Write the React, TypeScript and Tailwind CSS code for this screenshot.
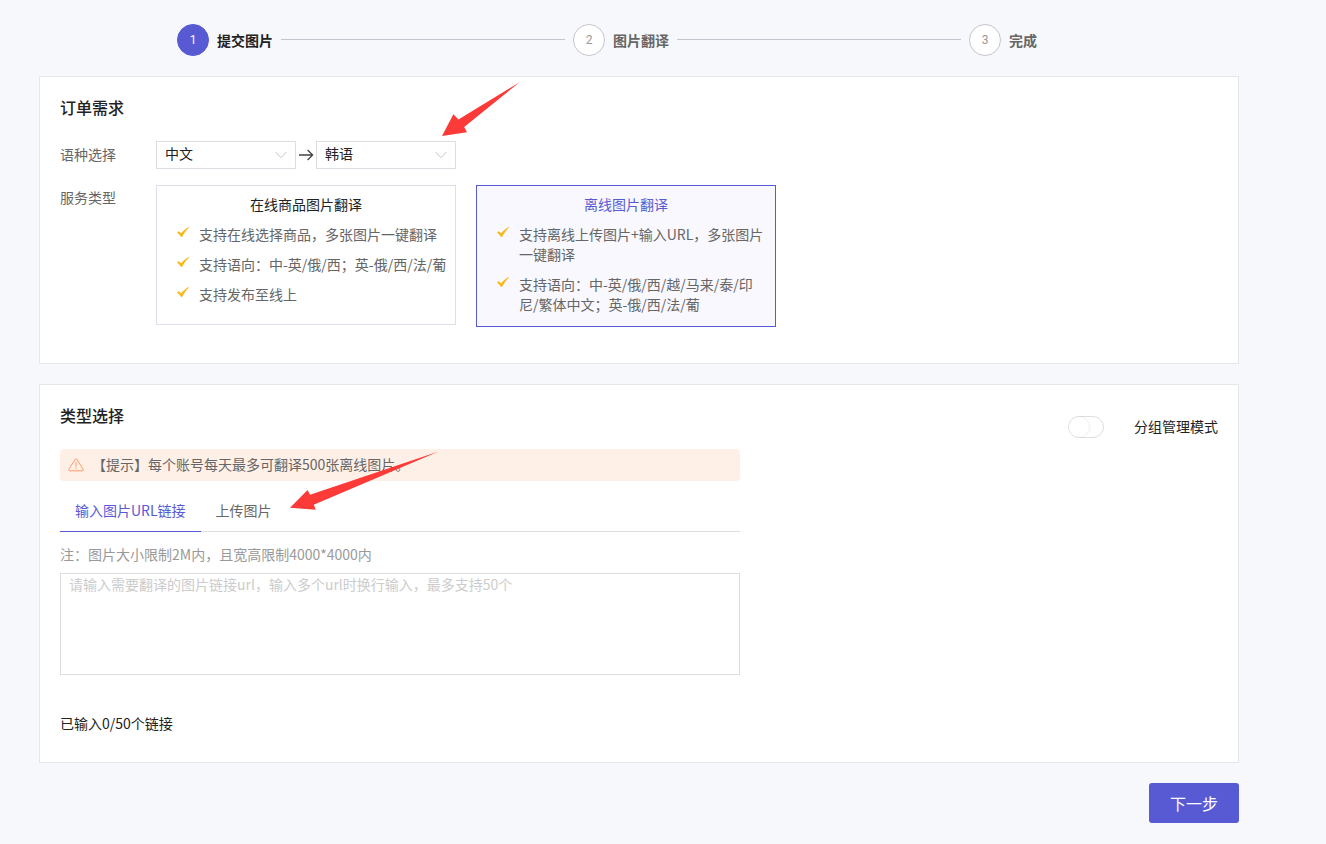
import { useState } from 'react';
import clsx from 'clsx';

const steps = ['提交图片', '图片翻译', '完成'];

const services = [
  {
    id: 'online',
    title: '在线商品图片翻译',
    features: [
      '支持在线选择商品，多张图片一键翻译',
      '支持语向：中-英/俄/西；英-俄/西/法/葡',
      '支持发布至线上',
    ],
  },
  {
    id: 'offline',
    title: '离线图片翻译',
    features: [
      '支持离线上传图片+输入URL，多张图片一键翻译',
      '支持语向：中-英/俄/西/越/马来/泰/印尼/繁体中文；英-俄/西/法/葡',
    ],
  },
];

const tabs = [
  { id: 'url', label: '输入图片URL链接' },
  { id: 'upload', label: '上传图片' },
];

const Steps = () => (
  <ol className="flex px-[138px]">
    {steps.map((step, index) => {
      const isLast = index === steps.length - 1;
      return (
        <li key={step} className={clsx('flex items-center gap-2', isLast ? 'w-[132px]' : 'flex-1')}>
          <span
            className={clsx(
              'flex size-8 shrink-0 items-center justify-center rounded-full border font-[Roboto,sans-serif] text-xs',
              index === 0 ? 'border-[#585ad4] bg-[#585ad4] text-white' : 'border-[#c4c6cf] bg-white text-[#999]'
            )}
          >
            {index + 1}
          </span>
          <span className={clsx('shrink-0 font-bold', index === 0 ? 'text-[#222]' : 'text-[#666]')}>{step}</span>
          {!isLast && <span className="mr-2 mb-0.5 h-px flex-1 bg-[#c4c6cf]" />}
        </li>
      );
    })}
  </ol>
);

const CheckIcon = () => (
  <svg viewBox="0 0 12 10" className="mt-[3px] h-2.5 w-3 shrink-0" aria-hidden="true">
    <path d="M0 5.4 1.5 4.2 4.2 6.2C6.4 3.6 8.9 1.5 11.6 0L12 .5C9.3 3.1 7 6.2 5.1 9.7L4 10C3 8 1.6 6.5 0 5.4Z" fill="#f9b813" />
  </svg>
);

const LanguageSelect = ({ id, label, options }: { id: string; label: string; options: string[] }) => (
  <span className="relative block w-[140px]">
    <select
      id={id}
      aria-label={label}
      className="block h-7 w-full appearance-none border border-[#dcdee3] bg-white px-2 pb-1 leading-5 text-[#222] outline-none"
    >
      {options.map((option) => (
        <option key={option}>{option}</option>
      ))}
    </select>
    <svg
      viewBox="0 0 12 8"
      className="pointer-events-none absolute top-2.5 right-[9px] h-2 w-3"
      fill="none"
      stroke="#c4c6cf"
      aria-hidden="true"
    >
      <path d="M.5 1 6 6.6 11.5 1" />
    </svg>
  </span>
);

const OrderSection = () => {
  const [service, setService] = useState('offline');

  return (
    <section className="mt-5 border border-[#e6e7eb] bg-white px-5 pt-[18px] pb-9">
      <h2 className="text-base leading-6 font-medium text-[#222]">订单需求</h2>

      <div className="mt-[22px] flex items-center">
        <label htmlFor="source" className="w-24 pb-[3px] text-[#666]">语种选择</label>
        <LanguageSelect id="source" label="源语种" options={['中文', '英语']} />
        <svg viewBox="0 0 20 12" className="h-3 w-5" fill="none" stroke="#444" strokeWidth="1.3" aria-hidden="true">
          <path d="M3 6H16.4M11.6 1 16.6 6 11.6 11" />
        </svg>
        <div className="relative">
          <LanguageSelect id="target" label="目标语种" options={['韩语', '英语', '俄语']} />
          {/* pointer to the target language */}
          <svg viewBox="0 0 78 54" className="pointer-events-none absolute -top-[59px] left-[126px] h-[54px] w-[78px]" aria-hidden="true">
            <path d="M0 54 11.4 32.2 16.4 37.4 77.6 .2 22.2 45 25 50.2Z" fill="#fc3a38" />
          </svg>
        </div>
      </div>

      <div className="mt-4 flex items-start">
        <span className="w-24 shrink-0 pt-0.5 text-[#666]">服务类型</span>
        <div className="flex flex-wrap items-start gap-5" role="radiogroup" aria-label="服务类型">
          {services.map(({ id, title, features }) => {
            const active = id === service;
            return (
              <label
                key={id}
                className={clsx(
                  'relative flex min-h-[140px] w-[300px] cursor-pointer flex-col gap-2.5 border pt-2 pr-2 pb-3 pl-5',
                  active ? 'border-[#585ad4] bg-[#f8f8fe]' : 'border-[#dcdeeb] bg-white'
                )}
              >
                <input
                  type="radio"
                  name="service"
                  className="sr-only"
                  checked={active}
                  onChange={() => setService(id)}
                />
                <span className={clsx('pr-3 text-center', active ? 'text-[#585ad4]' : 'text-[#222]')}>{title}</span>
                {features.map((feature) => (
                  <span key={feature} className="flex gap-2.5 text-[#666]">
                    <CheckIcon />
                    <span className="flex-1">{feature}</span>
                  </span>
                ))}
              </label>
            );
          })}
        </div>
      </div>
    </section>
  );
};

const SourceSection = () => {
  const [tab, setTab] = useState('url');
  const [grouped, setGrouped] = useState(false);
  const [urls, setUrls] = useState('');
  const count = urls.split('\n').filter((line) => line.trim()).length;

  return (
    <section className="mt-5 flex justify-between gap-5 border border-[#e6e7eb] bg-white px-5 pt-[18px] pb-[29px]">
      <div className="w-full max-w-[680px]">
        <h2 className="text-base leading-6 font-medium text-[#222]">类型选择</h2>

        <div className="mt-[22px] flex h-8 items-center rounded-sm bg-[#fff0e7] px-2 text-[#666]" role="note">
          <svg viewBox="0 0 16 14" className="mr-2 h-3.5 w-4" fill="none" stroke="#ff9a66" strokeLinejoin="round" aria-hidden="true">
            <path d="M7.3 1.1Q8 .2 8.7 1.1L15.3 11.6Q15.7 12.7 14.6 12.8H1.4Q.3 12.7 .7 11.6ZM8 4V9M8 10V11" />
          </svg>
          <p className="pb-0.5">【提示】每个账号每天最多可翻译500张离线图片。</p>
        </div>

        <div className="relative mt-2.5 flex border-b border-[#dcdee3]" role="tablist">
          {tabs.map(({ id, label }) => (
            <button
              key={id}
              type="button"
              role="tab"
              aria-selected={id === tab}
              onClick={() => setTab(id)}
              className={clsx(
                '-mb-px h-[41px] cursor-pointer border-b px-[15px] pb-0.5',
                id === tab ? 'border-[#585ad4] text-[#585ad4]' : 'border-transparent text-[#666]'
              )}
            >
              {label}
            </button>
          ))}
          {/* pointer to the upload tab */}
          <svg viewBox="0 0 149 59" className="pointer-events-none absolute -top-10 left-[230px] h-[59px] w-[149px]" aria-hidden="true">
            <path d="M0 56.8 17.6 39 20 43.8 148.6 .6 23.8 53.8 25.8 58.8Z" fill="#fc3a38" />
          </svg>
        </div>

        <label htmlFor="urls" className="mt-3 block text-[#999]">
          注：图片大小限制2M内，且宽高限制4000*4000内
        </label>
        <textarea
          id="urls"
          value={urls}
          onChange={(e) => setUrls(e.target.value)}
          placeholder="请输入需要翻译的图片链接url，输入多个url时换行输入，最多支持50个"
          className="mt-[9px] block h-[102px] w-full resize-none border border-[#dcdee3] px-2 text-[#222] outline-none placeholder:text-[#ccc]"
        />
        <p className="mt-[38px] text-[#222]">已输入{count}/50个链接</p>
      </div>

      <label className="flex h-fit shrink-0 cursor-pointer items-center gap-[30px] pt-[13px] text-[#222]">
        <input
          type="checkbox"
          role="switch"
          checked={grouped}
          onChange={(e) => setGrouped(e.target.checked)}
          className="h-[22px] w-9 appearance-none rounded-full border border-[#dcdee3] bg-white before:block before:size-5 before:rounded-full before:bg-white before:shadow-[1px_0_2px_rgba(0,0,0,0.08)] checked:bg-[#585ad4] checked:before:ml-3.5"
        />
        <span className="pb-0.5">分组管理模式</span>
      </label>
    </section>
  );
};

const App = () => (
  <main className="min-h-screen bg-[#f7f8fc] py-6 pr-5 pl-[39px] font-['Noto_Sans_CJK_SC',sans-serif] text-sm leading-5">
    <div className="w-full max-w-[1200px]">
      <Steps />
      <OrderSection />
      <SourceSection />
      <div className="mt-5 flex justify-end">
        <button type="button" className="h-10 cursor-pointer rounded-[3px] bg-[#585ad4] px-[21px] text-base text-white">
          下一步
        </button>
      </div>
    </div>
  </main>
);

export default App;
